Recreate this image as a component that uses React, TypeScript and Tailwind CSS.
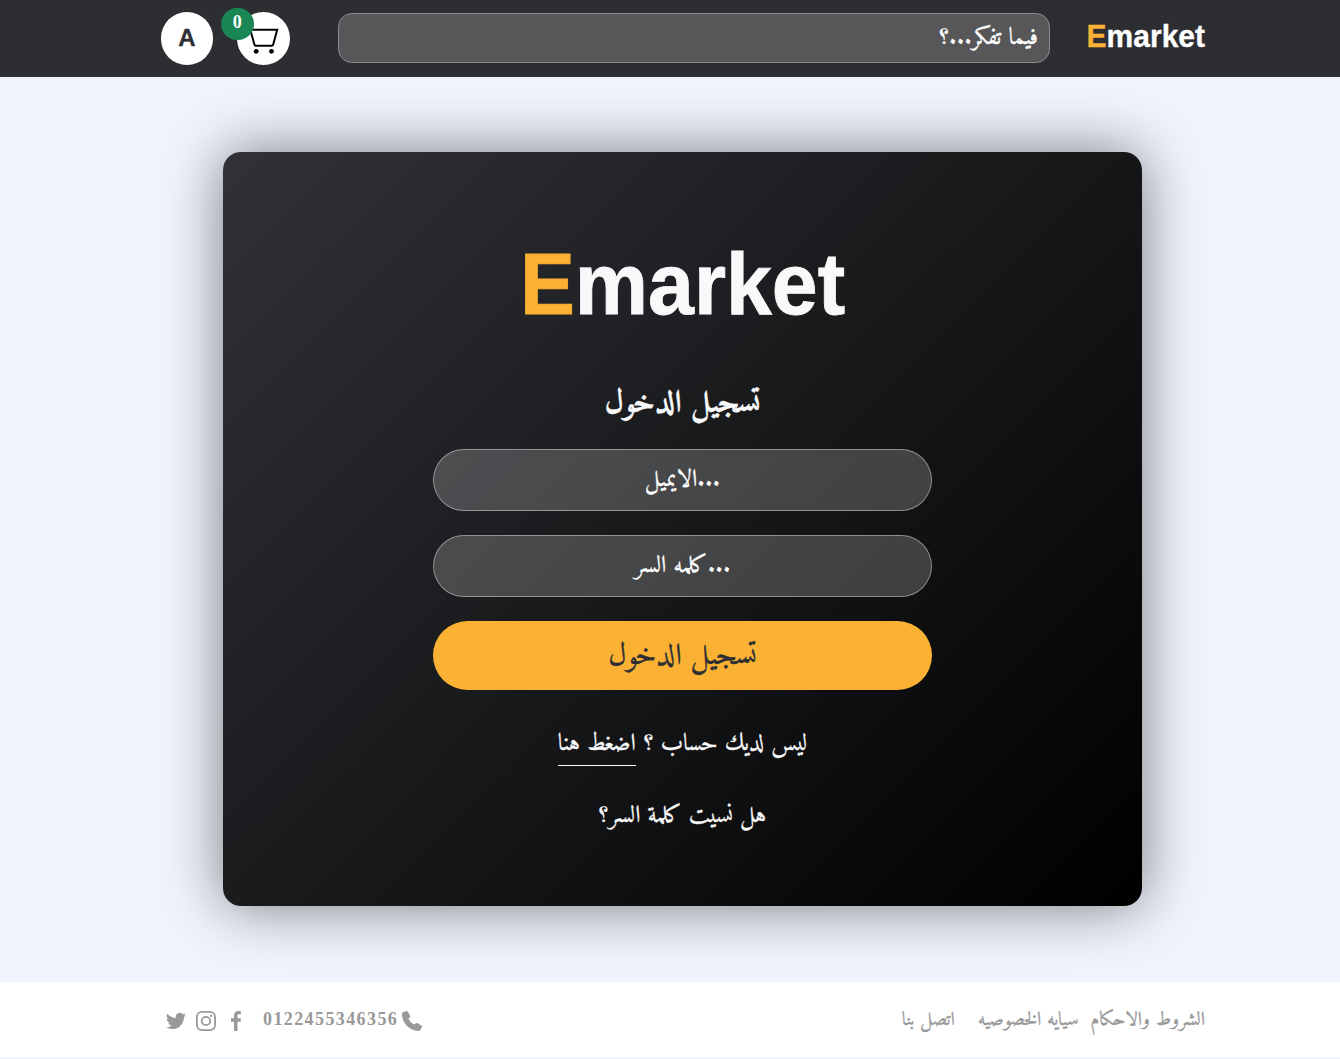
import type { ReactNode } from "react";

function Arabic({ children, className = "" }: { children: ReactNode; className?: string }) {
  return (
    <span dir="rtl" className={`inline-block whitespace-nowrap [-webkit-text-stroke:0.35px_currentColor] ${className}`}>
      {children}
    </span>
  );
}

function Header() {
  return (
    <header className="flex h-[77px] items-start bg-[#2d2e32] pl-[161px] pr-[135px]">
      <div className="mt-3 flex h-[53px] w-[52px] shrink-0 items-center justify-center rounded-full bg-white pb-px font-['Liberation_Sans'] text-2xl font-bold text-[#2d2e32] [-webkit-text-stroke:0.3px_currentColor]">
        A
      </div>
      <div className="relative ml-6 mt-3 h-[53px] w-[53px] shrink-0 rounded-full bg-white">
        <svg viewBox="0 0 32 28" className="absolute left-[11px] top-[15px] h-7 w-8" fill="none" stroke="black" strokeWidth="2">
          <path d="M1.5 2.7H29.2L25.2 17.6Q24.9 18.7 23.6 18.7H8Q6.7 18.7 6.4 17.6L2.3 2.7" />
          <circle cx="8.2" cy="24.3" r="2.4" fill="black" stroke="none" />
          <circle cx="23.5" cy="24.3" r="2.4" fill="black" stroke="none" />
        </svg>
        <span className="absolute -left-[16.5px] top-[-4.5px] flex h-8 w-[33.5px] items-center justify-center rounded-full bg-[#198754] pb-[3px] font-['Liberation_Serif',serif] text-[18px] font-bold leading-none text-white">
          0
        </span>
      </div>
      <div className="ml-12 mt-[13px] flex h-[50px] w-[712px] shrink-0 items-center rounded-[14px] border border-[#8a8b8d] bg-[#575759] px-[11px] text-2xl text-white" dir="rtl">
        <Arabic>فيما تفكر...؟</Arabic>
      </div>
      <div className="ml-auto mt-[17px] origin-[50%_78%] scale-y-[1.05] font-['Liberation_Sans'] text-[30px] font-bold leading-10 text-white [-webkit-text-stroke:0.3px_currentColor]">
        <span className="text-[#fab134]">E</span>market
      </div>
    </header>
  );
}

function Login() {
  return (
    <main className="flex h-[905px] justify-center pl-[25px] pt-[75px]">
      <section className="flex h-[754px] w-[919px] flex-col items-center rounded-[18px] bg-[linear-gradient(135deg,#313238_0%,#1a1b1d_45%,#000_100%)] text-[#f8f9fa] shadow-[0_0_60px_rgba(0,0,0,0.5)]">
        <h1 className="mb-px mt-[83px] h-[100px] origin-[50%_78%] scale-y-[1.05] font-['Liberation_Sans'] text-[82.4px] font-bold leading-[100px] [-webkit-text-stroke:0.8px_currentColor]">
          <span className="text-[#fab134]">E</span>market
        </h1>
        <h2 className="mt-[45px] flex h-12 items-center text-[31.5px] font-bold">
          <Arabic>تسجيل الدخول</Arabic>
        </h2>
        <div className="mt-5 flex h-[62px] w-[499px] items-center justify-center rounded-full border border-white/40 bg-white/20 text-2xl text-white">
          <Arabic>...الايميل</Arabic>
        </div>
        <div className="mt-6 flex h-[62px] w-[499px] items-center justify-center rounded-full border border-white/40 bg-white/20 text-2xl text-white">
          <Arabic>...كلمه السر</Arabic>
        </div>
        <button className="mt-6 flex h-[69px] w-[499px] items-center justify-center rounded-full bg-[#fab134] pt-px text-[30px] text-[#2d2e32]">
          <Arabic>تسجيل الدخول</Arabic>
        </button>
        <p className="mt-[31px] flex h-[45px] items-center gap-2 text-2xl" dir="rtl">
          <Arabic>ليس لديك حساب ؟</Arabic>
          <a className="flex h-[45px] items-center border-b border-white pt-px">
            <Arabic>اضغط هنا</Arabic>
          </a>
        </p>
        <p className="mt-7 flex h-11 items-center text-2xl">
          <Arabic>هل نسيت كلمة السر؟</Arabic>
        </p>
      </section>
    </main>
  );
}

function Footer() {
  return (
    <footer className="flex h-[75px] items-center bg-white pl-[166px] pr-[135px] text-[#999]">
      <svg viewBox="0 0 24 24" className="mt-[3px] size-5" fill="currentColor">
        <path d="M24 4.6a10 10 0 0 1-2.8.8 5 5 0 0 0 2.1-2.7 10 10 0 0 1-3.1 1.2 4.9 4.9 0 0 0-8.4 4.5A14 14 0 0 1 1.7 3.2a4.9 4.9 0 0 0 1.5 6.5 5 5 0 0 1-2.2-.6v.1a4.9 4.9 0 0 0 4 4.8 5 5 0 0 1-2.2.1 4.9 4.9 0 0 0 4.6 3.4A10 10 0 0 1 0 19.5a14 14 0 0 0 7.5 2.2c9.1 0 14-7.5 14-14v-.6A10 10 0 0 0 24 4.6z" />
      </svg>
      <svg viewBox="0 0 20 20" className="ml-[10px] mt-[3px] size-5" fill="none" stroke="currentColor" strokeWidth="1.8">
        <rect x=".9" y=".9" width="18.2" height="18.2" rx="5" />
        <circle cx="10" cy="10" r="4.2" />
        <circle cx="15.2" cy="4.8" r="1.2" fill="currentColor" stroke="none" />
      </svg>
      <svg viewBox="0 0 10 20" className="ml-[15px] mt-[3px] h-5 w-[10px]" fill="currentColor">
        <path d="M3 20V10.8H0V7.2H3V4.5C3 1.5 4.8 0 7.3 0 8.5 0 9.7.1 10 .2V3.3H8C6.7 3.3 6.5 4 6.5 4.9V7.2H10L9.5 10.8H6.5V20Z" />
      </svg>
      <span className="ml-[22px] w-[139px] whitespace-nowrap font-['Liberation_Serif',serif] text-[18px] font-bold tracking-[1.4px]">0122455346356</span>
      <svg viewBox="0 0 20 20" className="mt-[3px] size-5" fill="currentColor">
        <path d="M1 1.3L3.6.2C4.6-.1 5.4.1 5.8.8L8 4.6C8.4 5.4 8.2 6.2 7.5 6.8L6.4 7.8C7.6 10.3 9.7 12.4 12.3 13.6L13.4 12.5C14 11.9 14.9 11.8 15.6 12.2L19.3 14.4C20 14.9 20.2 15.7 19.8 16.5L18.4 19C17.8 19.8 17 20 16 20 7.5 19.4.6 12.5 0 4 0 2.8.2 1.8 1 1.3Z" />
      </svg>
      <nav className="ml-auto mt-[3px] flex text-[19.6px]" dir="rtl">
        <Arabic>الشروط والاحكام</Arabic>
        <Arabic className="mr-3">سيايه الخصوصيه</Arabic>
        <Arabic className="mr-[23px]">اتصل بنا</Arabic>
      </nav>
    </footer>
  );
}

export default function App() {
  return (
    <div className="h-[1059px] overflow-hidden bg-[#f0f4fd] font-['Amiri','Liberation_Serif',serif]">
      <Header />
      <Login />
      <Footer />
    </div>
  );
}
